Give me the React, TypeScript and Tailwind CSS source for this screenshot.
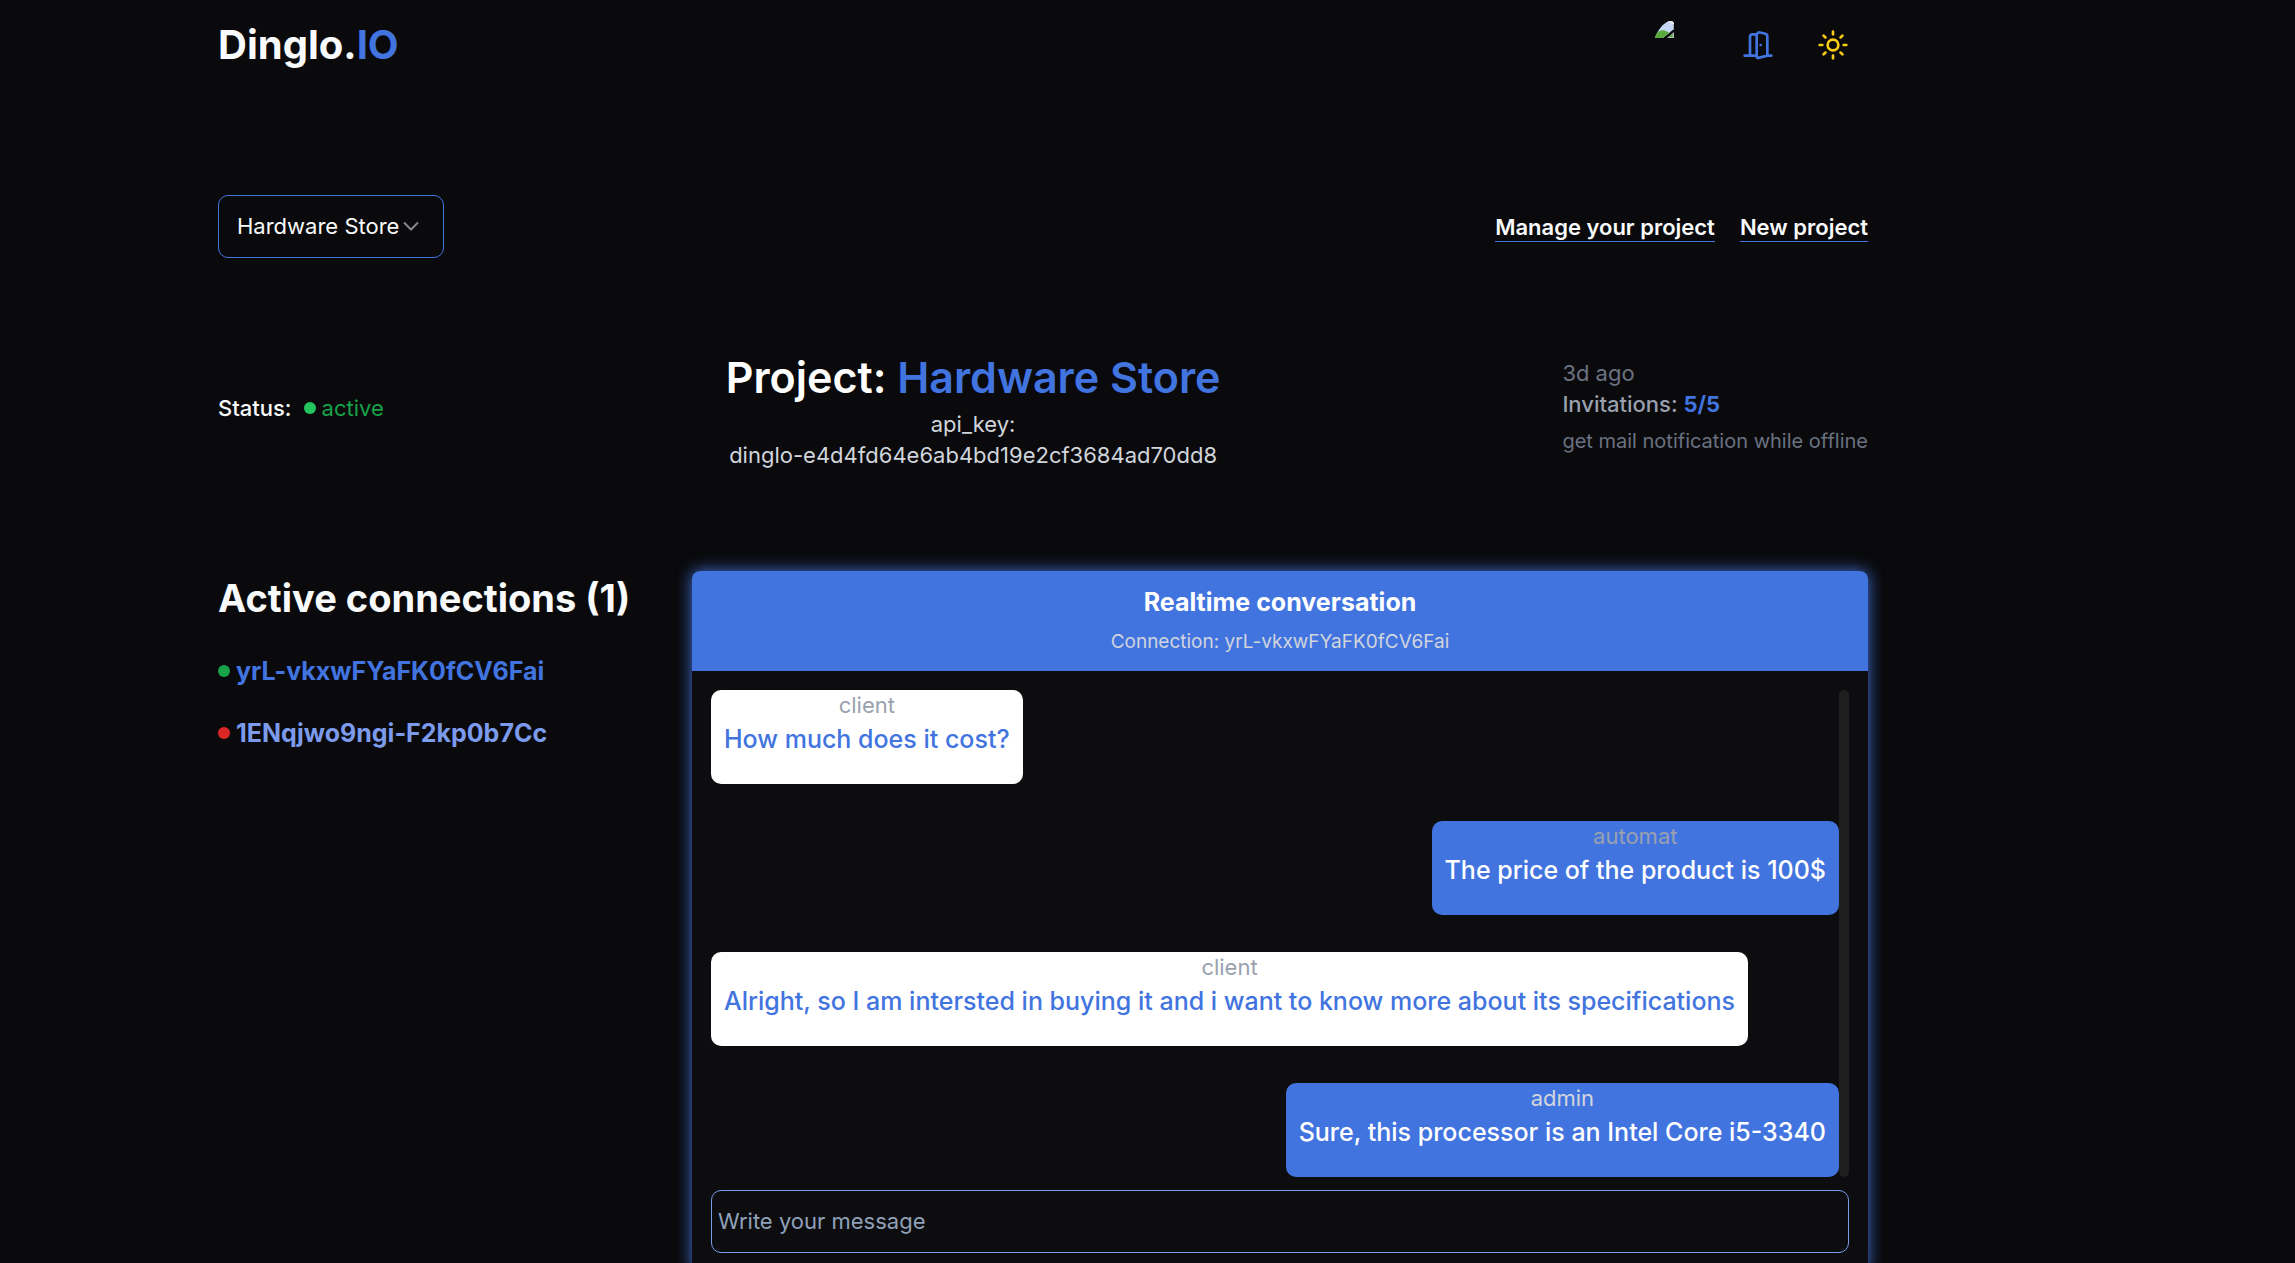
import { DoorOpen, Sun } from "lucide-react";

type Sender = "client" | "automat" | "admin";

const messages: { sender: Sender; text: string }[] = [
  { sender: "client", text: "How much does it cost?" },
  { sender: "automat", text: "The price of the product is 100$" },
  {
    sender: "client",
    text: "Alright, so I am intersted in buying it and i want to know more about its specifications",
  },
  { sender: "admin", text: "Sure, this processor is an Intel Core i5-3340" },
];

function Header() {
  return (
    <header className="flex h-[89px] items-center justify-between">
      <a href="#home" className="text-[40px] leading-[56px] font-bold text-gray-50">
        Dinglo.<span className="text-[#4274e0]">IO</span>
      </a>
      <div className="flex items-center gap-[43px] pr-[19px]">
        <div role="img" aria-label="Avatar" className="mr-[25px] h-12 w-[19px]">
          <svg viewBox="0 0 19 17" className="h-[17px] w-[19px]" aria-hidden="true">
            <path d="M0 17C2.500 9 7.500 3 14 0H17L19 2V8L8 17Z" fill="#c5d7f5" />
            <path d="M0 17C1 12 3.500 9.500 7 9.200C10 9 12.500 10.500 14 12L8 17Z" fill="#5aaa3e" />
            <path d="M12.500 1L14.500 0L17 0L19 2V3.500H16.500L16 1.500Z" fill="#e8e8e8" />
            <path d="M18 3V9L19 8V3Z" fill="#a9a9a9" />
            <path d="M12 17L19 11V17Z" fill="#a9b8ae" />
            <path d="M13.500 16L17.500 12.700V16Z" fill="#5aaa3e" />
          </svg>
        </div>
        <button type="button" aria-label="Sign out" className="text-[#4274e0]">
          <DoorOpen className="size-8" />
        </button>
        <button type="button" aria-label="Toggle theme" className="text-[#facc15]">
          <Sun className="size-8" />
        </button>
      </div>
    </header>
  );
}

function ProjectBar() {
  return (
    <div className="mt-[106px] flex items-center justify-between">
      <div className="relative">
        <select
          aria-label="Project"
          className="h-[63px] appearance-none rounded-[10px] border border-[#4274e0] bg-transparent pr-[43px] pl-[18px] text-[22px] text-gray-50"
        >
          <option>Hardware Store</option>
        </select>
        <svg
          viewBox="0 0 16 10"
          className="pointer-events-none absolute top-[26px] right-[25px] h-[10px] w-4"
          fill="none"
          stroke="#85858a"
          strokeWidth="2"
          aria-hidden="true"
        >
          <path d="M1 1.500l7 7l7-7" />
        </svg>
      </div>
      <nav className="flex gap-[25px] text-[22px] leading-[27px] font-semibold text-gray-50">
        <a href="#manage" className="border-b border-[#4274e0] pt-[2px]">
          Manage your project
        </a>
        <a href="#new" className="border-b border-[#4274e0] pt-[2px]">
          New project
        </a>
      </nav>
    </div>
  );
}

function ProjectInfo() {
  return (
    <section className="mt-[87px] flex items-center justify-between text-[22px] leading-[31px]">
      <div className="flex items-center">
        <span className="font-medium text-gray-50">Status:</span>
        <span className="ml-3 size-3 rounded-full bg-[#22c55e]" />
        <span className="ml-[6px] text-[#16a34a]">active</span>
      </div>
      <div className="text-center text-gray-300">
        <h1 className="text-[43px] leading-[64px] font-semibold text-white">
          Project: <span className="text-[#4274e0]">Hardware Store</span>
        </h1>
        <p>api_key:</p>
        <p>dinglo-e4d4fd64e6ab4bd19e2cf3684ad70dd8</p>
      </div>
      <div className="pb-[2px] text-gray-500">
        <p>3d ago</p>
        <p className="font-medium text-gray-400">
          Invitations: <span className="font-bold text-[#4274e0]">5/5</span>
        </p>
        <p className="mt-[6px] text-[20px]">get mail notification while offline</p>
      </div>
    </section>
  );
}

function Connections() {
  return (
    <aside className="w-[474px] shrink-0">
      <h2 className="text-[38px] leading-[54px] font-bold text-gray-50">Active connections (1)</h2>
      <ul className="mt-[27px] flex flex-col gap-6 text-[25px] leading-[38px] font-bold">
        <li className="flex items-center gap-[6px]">
          <span className="size-3 rounded-full bg-[#16a34a]" />
          <a href="#yrL-vkxwFYaFK0fCV6Fai" className="text-[#4274e0]">
            yrL-vkxwFYaFK0fCV6Fai
          </a>
        </li>
        <li className="flex items-center gap-[6px]">
          <span className="size-3 rounded-full bg-[#dc2626]" />
          <a href="#1ENqjwo9ngi-F2kp0b7Cc" className="text-[#7c9bec]">
            1ENqjwo9ngi-F2kp0b7Cc
          </a>
        </li>
      </ul>
    </aside>
  );
}

const bubbleStyle: Record<Sender, string> = {
  client: "self-start bg-white text-[#4274e0]",
  automat: "self-end bg-[#4274e0] text-white",
  admin: "self-end bg-[#4274e0] text-white",
};

const senderStyle: Record<Sender, string> = {
  client: "text-gray-400",
  automat: "text-gray-400",
  admin: "text-gray-300",
};

function Conversation() {
  return (
    <section className="min-w-0 grow rounded-lg bg-[#0d0d0f] shadow-[0_0_16px_#4274e0]">
      <div className="rounded-t-lg bg-[#4274e0] pt-3 pb-[10px] text-center leading-[39px]">
        <h2 className="text-[25px] leading-[39px] font-bold text-white">Realtime conversation</h2>
        <p className="text-[19px] text-gray-300">Connection: yrL-vkxwFYaFK0fCV6Fai</p>
      </div>
      <div className="p-[19px]">
        <div className="flex">
          <div className="flex grow flex-col gap-[37px]">
            {messages.map((m) => (
              <div
                key={m.text}
                className={`rounded-[10px] px-[13px] pb-[26px] text-center ${bubbleStyle[m.sender]}`}
              >
                <p className={`text-[22px] leading-[31px] ${senderStyle[m.sender]}`}>{m.sender}</p>
                <p className="text-[25px] leading-[37px] font-medium">{m.text}</p>
              </div>
            ))}
          </div>
          <div className="w-[10px] rounded-full bg-[#1e1e1e]" />
        </div>
        <input
          type="text"
          aria-label="Write your message"
          placeholder="Write your message"
          className="mt-[13px] block h-[63px] w-full rounded-[10px] border border-[#7c9bec] bg-transparent px-[6px] pb-[2px] text-[22px] text-gray-50 placeholder:text-slate-400"
        />
      </div>
    </section>
  );
}

export default function App() {
  return (
    <div className="min-h-screen bg-[#0a0a0c] pr-[427px] pl-[218px] font-['Inter',sans-serif]">
      <Header />
      <main>
        <ProjectBar />
        <ProjectInfo />
        <div className="mt-[100px] flex">
          <Connections />
          <Conversation />
        </div>
      </main>
    </div>
  );
}
